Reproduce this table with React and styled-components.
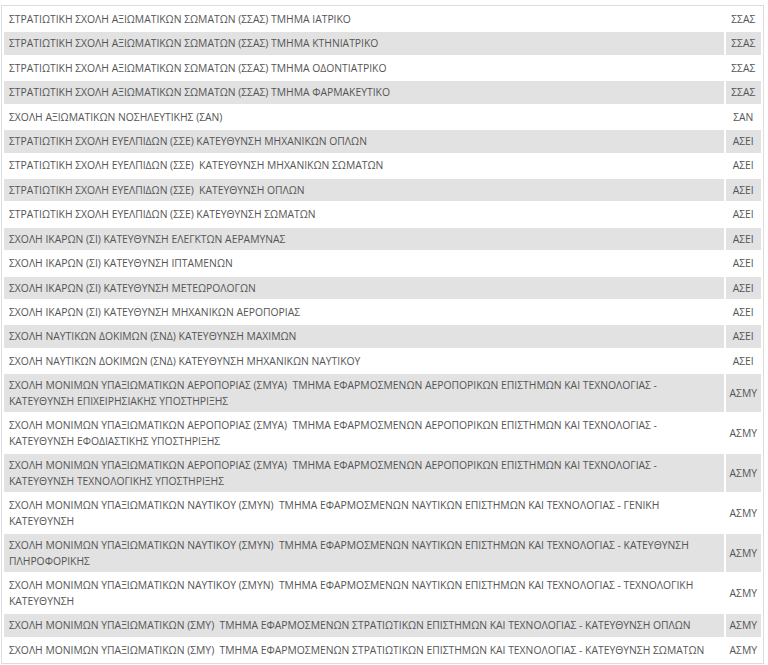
import React from "react";
import styled, { createGlobalStyle } from "styled-components";

const GlobalStyle = createGlobalStyle`
  html, body { margin: 0; padding: 0; background: #ffffff; }
  body { font-family: "Open Sans", "Liberation Sans", sans-serif; }
`;

const Frame = styled.div`
  margin: 5px 4px 0 1px;
  border: 1px solid #dddddd;
  background: #ffffff;
`;

const Table = styled.table`
  width: 100%;
  border-collapse: separate;
  border-spacing: 2px;
  font-family: "Open Sans", "Liberation Sans", sans-serif;
  font-size: 10.35px;
  line-height: 15.6px;
  color: #555555;
`;

const Row = styled.tr`
  background: ${(p) => (p.$shaded ? "#e2e2e2" : "#ffffff")};
`;

const NameCell = styled.td`
  padding: 3.9px 5px 2.95px;
  text-align: left;
  vertical-align: middle;
  white-space: pre-wrap;
`;

const CodeCell = styled.td`
  padding: 3.9px 4px 2.95px;
  text-align: center;
  vertical-align: middle;
  white-space: nowrap;
`;

const NB = "\u00a0 ";

const rows = [
  ["ΣΤΡΑΤΙΩΤΙΚΗ ΣΧΟΛΗ ΑΞΙΩΜΑΤΙΚΩΝ ΣΩΜΑΤΩΝ (ΣΣΑΣ) ΤΜΗΜΑ ΙΑΤΡΙΚΟ", "ΣΣΑΣ"],
  ["ΣΤΡΑΤΙΩΤΙΚΗ ΣΧΟΛΗ ΑΞΙΩΜΑΤΙΚΩΝ ΣΩΜΑΤΩΝ (ΣΣΑΣ) ΤΜΗΜΑ ΚΤΗΝΙΑΤΡΙΚΟ", "ΣΣΑΣ"],
  ["ΣΤΡΑΤΙΩΤΙΚΗ ΣΧΟΛΗ ΑΞΙΩΜΑΤΙΚΩΝ ΣΩΜΑΤΩΝ (ΣΣΑΣ) ΤΜΗΜΑ ΟΔΟΝΤΙΑΤΡΙΚΟ", "ΣΣΑΣ"],
  ["ΣΤΡΑΤΙΩΤΙΚΗ ΣΧΟΛΗ ΑΞΙΩΜΑΤΙΚΩΝ ΣΩΜΑΤΩΝ (ΣΣΑΣ) ΤΜΗΜΑ ΦΑΡΜΑΚΕΥΤΙΚΟ", "ΣΣΑΣ"],
  ["ΣΧΟΛΗ ΑΞΙΩΜΑΤΙΚΩΝ ΝΟΣΗΛΕΥΤΙΚΗΣ (ΣΑΝ)", "ΣΑΝ"],
  ["ΣΤΡΑΤΙΩΤΙΚΗ ΣΧΟΛΗ ΕΥΕΛΠΙΔΩΝ (ΣΣΕ) ΚΑΤΕΥΘΥΝΣΗ ΜΗΧΑΝΙΚΩΝ ΟΠΛΩΝ", "ΑΣΕΙ"],
  ["ΣΤΡΑΤΙΩΤΙΚΗ ΣΧΟΛΗ ΕΥΕΛΠΙΔΩΝ (ΣΣΕ)" + NB + "ΚΑΤΕΥΘΥΝΣΗ ΜΗΧΑΝΙΚΩΝ ΣΩΜΑΤΩΝ", "ΑΣΕΙ"],
  ["ΣΤΡΑΤΙΩΤΙΚΗ ΣΧΟΛΗ ΕΥΕΛΠΙΔΩΝ (ΣΣΕ)" + NB + "ΚΑΤΕΥΘΥΝΣΗ ΟΠΛΩΝ", "ΑΣΕΙ"],
  ["ΣΤΡΑΤΙΩΤΙΚΗ ΣΧΟΛΗ ΕΥΕΛΠΙΔΩΝ (ΣΣΕ) ΚΑΤΕΥΘΥΝΣΗ ΣΩΜΑΤΩΝ", "ΑΣΕΙ"],
  ["ΣΧΟΛΗ ΙΚΑΡΩΝ (ΣΙ) ΚΑΤΕΥΘΥΝΣΗ ΕΛΕΓΚΤΩΝ ΑΕΡΑΜΥΝΑΣ", "ΑΣΕΙ"],
  ["ΣΧΟΛΗ ΙΚΑΡΩΝ (ΣΙ) ΚΑΤΕΥΘΥΝΣΗ ΙΠΤΑΜΕΝΩΝ", "ΑΣΕΙ"],
  ["ΣΧΟΛΗ ΙΚΑΡΩΝ (ΣΙ) ΚΑΤΕΥΘΥΝΣΗ ΜΕΤΕΩΡΟΛΟΓΩΝ", "ΑΣΕΙ"],
  ["ΣΧΟΛΗ ΙΚΑΡΩΝ (ΣΙ) ΚΑΤΕΥΘΥΝΣΗ ΜΗΧΑΝΙΚΩΝ ΑΕΡΟΠΟΡΙΑΣ", "ΑΣΕΙ"],
  ["ΣΧΟΛΗ ΝΑΥΤΙΚΩΝ ΔΟΚΙΜΩΝ (ΣΝΔ) ΚΑΤΕΥΘΥΝΣΗ ΜΑΧΙΜΩΝ", "ΑΣΕΙ"],
  ["ΣΧΟΛΗ ΝΑΥΤΙΚΩΝ ΔΟΚΙΜΩΝ (ΣΝΔ) ΚΑΤΕΥΘΥΝΣΗ ΜΗΧΑΝΙΚΩΝ ΝΑΥΤΙΚΟΥ", "ΑΣΕΙ"],
  ["ΣΧΟΛΗ ΜΟΝΙΜΩΝ ΥΠΑΞΙΩΜΑΤΙΚΩΝ ΑΕΡΟΠΟΡΙΑΣ (ΣΜΥΑ)" + NB + "ΤΜΗΜΑ ΕΦΑΡΜΟΣΜΕΝΩΝ ΑΕΡΟΠΟΡΙΚΩΝ ΕΠΙΣΤΗΜΩΝ ΚΑΙ ΤΕΧΝΟΛΟΓΙΑΣ - ΚΑΤΕΥΘΥΝΣΗ ΕΠΙΧΕΙΡΗΣΙΑΚΗΣ ΥΠΟΣΤΗΡΙΞΗΣ", "ΑΣΜΥ"],
  ["ΣΧΟΛΗ ΜΟΝΙΜΩΝ ΥΠΑΞΙΩΜΑΤΙΚΩΝ ΑΕΡΟΠΟΡΙΑΣ (ΣΜΥΑ)" + NB + "ΤΜΗΜΑ ΕΦΑΡΜΟΣΜΕΝΩΝ ΑΕΡΟΠΟΡΙΚΩΝ ΕΠΙΣΤΗΜΩΝ ΚΑΙ ΤΕΧΝΟΛΟΓΙΑΣ - ΚΑΤΕΥΘΥΝΣΗ ΕΦΟΔΙΑΣΤΙΚΗΣ ΥΠΟΣΤΗΡΙΞΗΣ", "ΑΣΜΥ"],
  ["ΣΧΟΛΗ ΜΟΝΙΜΩΝ ΥΠΑΞΙΩΜΑΤΙΚΩΝ ΑΕΡΟΠΟΡΙΑΣ (ΣΜΥΑ)" + NB + "ΤΜΗΜΑ ΕΦΑΡΜΟΣΜΕΝΩΝ ΑΕΡΟΠΟΡΙΚΩΝ ΕΠΙΣΤΗΜΩΝ ΚΑΙ ΤΕΧΝΟΛΟΓΙΑΣ - ΚΑΤΕΥΘΥΝΣΗ ΤΕΧΝΟΛΟΓΙΚΗΣ ΥΠΟΣΤΗΡΙΞΗΣ", "ΑΣΜΥ"],
  ["ΣΧΟΛΗ ΜΟΝΙΜΩΝ ΥΠΑΞΙΩΜΑΤΙΚΩΝ ΝΑΥΤΙΚΟΥ (ΣΜΥΝ)" + NB + "ΤΜΗΜΑ ΕΦΑΡΜΟΣΜΕΝΩΝ ΝΑΥΤΙΚΩΝ ΕΠΙΣΤΗΜΩΝ ΚΑΙ ΤΕΧΝΟΛΟΓΙΑΣ - ΓΕΝΙΚΗ ΚΑΤΕΥΘΥΝΣΗ", "ΑΣΜΥ"],
  ["ΣΧΟΛΗ ΜΟΝΙΜΩΝ ΥΠΑΞΙΩΜΑΤΙΚΩΝ ΝΑΥΤΙΚΟΥ (ΣΜΥΝ)" + NB + "ΤΜΗΜΑ ΕΦΑΡΜΟΣΜΕΝΩΝ ΝΑΥΤΙΚΩΝ ΕΠΙΣΤΗΜΩΝ ΚΑΙ ΤΕΧΝΟΛΟΓΙΑΣ - ΚΑΤΕΥΘΥΝΣΗ ΠΛΗΡΟΦΟΡΙΚΗΣ", "ΑΣΜΥ"],
  ["ΣΧΟΛΗ ΜΟΝΙΜΩΝ ΥΠΑΞΙΩΜΑΤΙΚΩΝ ΝΑΥΤΙΚΟΥ (ΣΜΥΝ)" + NB + "ΤΜΗΜΑ ΕΦΑΡΜΟΣΜΕΝΩΝ ΝΑΥΤΙΚΩΝ ΕΠΙΣΤΗΜΩΝ ΚΑΙ ΤΕΧΝΟΛΟΓΙΑΣ - ΤΕΧΝΟΛΟΓΙΚΗ ΚΑΤΕΥΘΥΝΣΗ", "ΑΣΜΥ"],
  ["ΣΧΟΛΗ ΜΟΝΙΜΩΝ ΥΠΑΞΙΩΜΑΤΙΚΩΝ (ΣΜΥ)" + NB + "ΤΜΗΜΑ ΕΦΑΡΜΟΣΜΕΝΩΝ ΣΤΡΑΤΙΩΤΙΚΩΝ ΕΠΙΣΤΗΜΩΝ ΚΑΙ ΤΕΧΝΟΛΟΓΙΑΣ - ΚΑΤΕΥΘΥΝΣΗ ΟΠΛΩΝ", "ΑΣΜΥ"],
  ["ΣΧΟΛΗ ΜΟΝΙΜΩΝ ΥΠΑΞΙΩΜΑΤΙΚΩΝ (ΣΜΥ)" + NB + "ΤΜΗΜΑ ΕΦΑΡΜΟΣΜΕΝΩΝ ΣΤΡΑΤΙΩΤΙΚΩΝ ΕΠΙΣΤΗΜΩΝ ΚΑΙ ΤΕΧΝΟΛΟΓΙΑΣ - ΚΑΤΕΥΘΥΝΣΗ ΣΩΜΑΤΩΝ", "ΑΣΜΥ"],
];

export default function App() {
  return (
    <>
      <GlobalStyle />
      <Frame>
        <Table>
          <tbody>
            {rows.map(([name, code], i) => (
              <Row key={i} $shaded={i % 2 === 1}>
                <NameCell>{name}</NameCell>
                <CodeCell>{code}</CodeCell>
              </Row>
            ))}
          </tbody>
        </Table>
      </Frame>
    </>
  );
}
